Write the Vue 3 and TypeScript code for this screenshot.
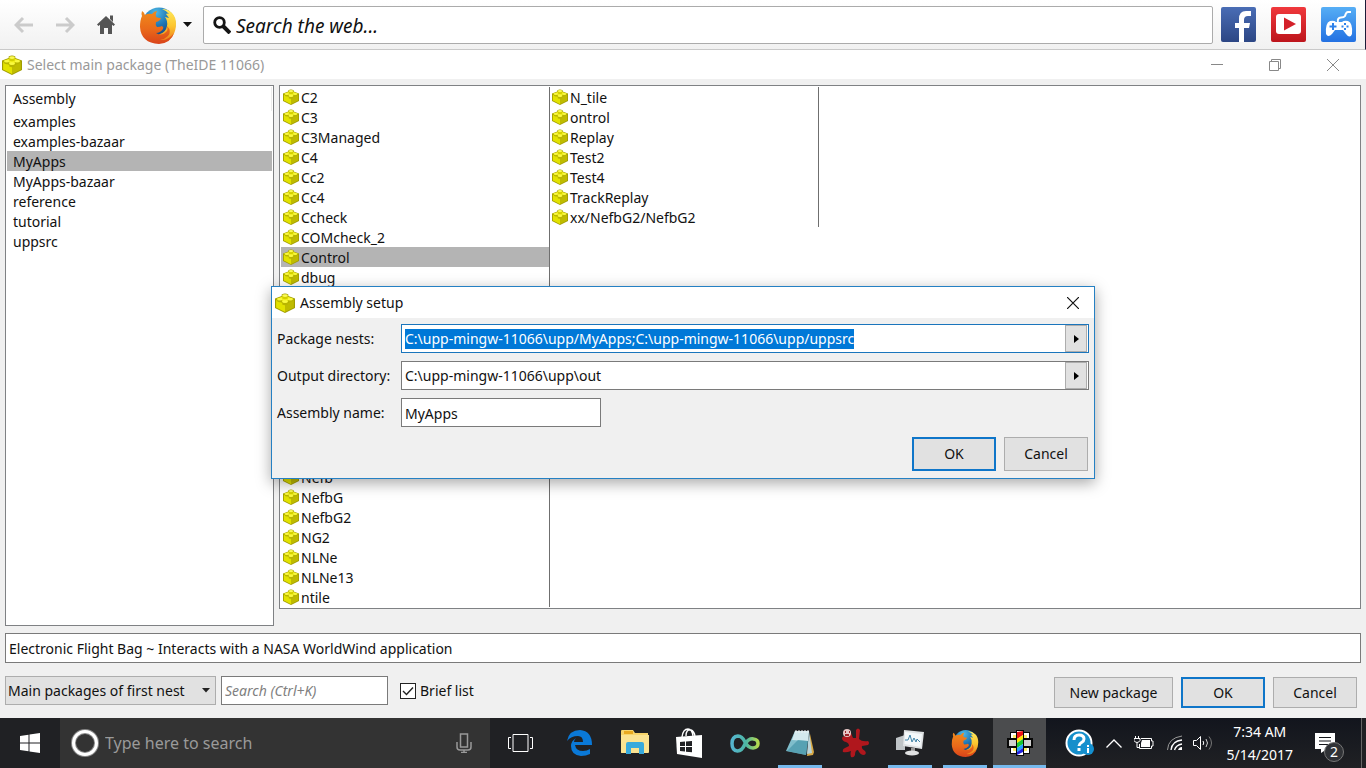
<script setup lang="ts">
import { onMounted, ref } from 'vue'

const assemblies: string[] = ['examples', 'examples-bazaar', 'MyApps', 'MyApps-bazaar', 'reference', 'tutorial', 'uppsrc']
const firstTop: string[] = ['C2', 'C3', 'C3Managed', 'C4', 'Cc2', 'Cc4', 'Ccheck', 'COMcheck_2', 'Control', 'dbug']
const firstBottom: string[] = ['Nefb', 'NefbG', 'NefbG2', 'NG2', 'NLNe', 'NLNe13', 'ntile']
const second: string[] = ['N_tile', 'ontrol', 'Replay', 'Test2', 'Test4', 'TrackReplay', 'xx/NefbG2/NefbG2']

const assembly = ref('MyApps')
const current = ref('Control')
const brief = ref(true)
const nests = ref('C:\\upp-mingw-11066\\upp/MyApps;C:\\upp-mingw-11066\\upp/uppsrc')
const output = ref('C:\\upp-mingw-11066\\upp\\out')
const name = ref('MyApps')
const description = ref('Electronic Flight Bag ~ Interacts with a NASA WorldWind application')
const nestsInput = ref<HTMLInputElement | null>(null)

onMounted(() => {
  nestsInput.value?.focus()
  nestsInput.value?.select()
})
</script>

<template>
  <div class="desktop">
    <svg class="sprite" aria-hidden="true">
      <defs>
        <linearGradient id="fox" x1="0" y1="0" x2="0" y2="1">
          <stop offset="0" stop-color="#f08a1c" />
          <stop offset=".55" stop-color="#ea6a1a" />
          <stop offset="1" stop-color="#d9431a" />
        </linearGradient>
        <linearGradient id="tail" x1="0" y1="0" x2="0" y2="1">
          <stop offset="0" stop-color="#ffe95c" />
          <stop offset=".5" stop-color="#fcc52e" />
          <stop offset="1" stop-color="#ec7418" />
        </linearGradient>
        <radialGradient id="globe" cx=".4" cy=".15" r=".8">
          <stop offset="0" stop-color="#4cb8e6" />
          <stop offset=".5" stop-color="#1f76b4" />
          <stop offset="1" stop-color="#123a70" />
        </radialGradient>
        <symbol id="brick" viewBox="1 0 18 20" preserveAspectRatio="none">
          <path d="M1 5.500 7 3V1.500Q10-.5 13 1.500V3l6 2.500V15l-9 5-9-5z" fill="#a19d00" />
          <path d="M2 7l8 4v8l-8-4.500z" fill="#e2e200" />
          <path d="M18 7l-8 4v8l8-4.500z" fill="#bfbb00" />
          <path d="M2 6l8-3.500L18 6l-8 4.500z" fill="#f2f01c" />
          <path d="M7.500 2.500v3q2.500 1.500 5 0v-3z" fill="#d4d000" />
          <ellipse cx="10" cy="2.600" rx="2.500" ry="1.400" fill="#fbfa55" />
          <path d="M3 6.500v2q2 1.500 4.500.3v-2zM12.500 6.800v2q2 1.200 4.500-.3v-2zM7.500 9v2.500q2.500 1.500 5 0V9z" fill="#b9b500" />
          <ellipse cx="5.300" cy="6.200" rx="2.300" ry="1.300" fill="#f9f840" />
          <ellipse cx="14.700" cy="6.200" rx="2.300" ry="1.300" fill="#f9f840" />
          <ellipse cx="10" cy="8.700" rx="2.500" ry="1.400" fill="#f9f840" />
        </symbol>
        <symbol id="firefox" viewBox="0 0 38 38">
          <circle cx="20" cy="18" r="16.500" fill="url(#globe)" />
          <path d="M23 3q5 2 7 5-2-1-3 0l3 4-4-1q3 4 2 9-1 6-7 8l-5 3 8 6Q37 32 37 18q0-7-4-11-4-4-10-4z" fill="url(#tail)" />
          <path d="M3 5q2 1 3 4 3-2 7-1 2-3 5-3-2 3-1 6 2 1 5 1-1 3-5 4-1 3 1 5 3 0 5-1 2 1 1 3-3 4-7 4 6 4 11-2 1-2 0-5 5 5 1 10-3 3-8 4 8 1 14-7-3 10-15 11Q2 37 1 21q0-7 2-11-1-2 0-5z" fill="url(#fox)" />
        </symbol>
      </defs>
    </svg>

    <header class="browser">
      <button class="plain" aria-label="Back">
        <svg width="20" height="18" viewBox="0 0 20 18"><path d="M9 2 2 9l7 7M2.500 9H19" fill="none" stroke="#cbcbcb" stroke-width="3" /></svg>
      </button>
      <button class="plain" aria-label="Forward">
        <svg width="20" height="18" viewBox="0 0 20 18"><path d="m11 2 7 7-7 7M17.500 9H1" fill="none" stroke="#cbcbcb" stroke-width="3" /></svg>
      </button>
      <button class="plain home" aria-label="Home">
        <svg width="20" height="20" viewBox="0 0 20 20"><path d="M14 .5h3V7l-3-3z" fill="#555" /><path d="M10 1 1 9.500 2.500 11 4 9.800V19h4v-6h4v6h4V9.800l1.500 1.200L19 9.500z" fill="#555" /></svg>
      </button>
      <button class="plain engine" aria-label="Search engine">
        <svg width="38" height="38"><use href="#firefox" /></svg>
        <svg width="9" height="5" viewBox="0 0 9 5"><path d="M0 0h9L4.500 5z" fill="#111" /></svg>
      </button>
      <label class="web-search">
        <svg width="18" height="18" viewBox="0 0 18 18"><circle cx="6.500" cy="6.500" r="4.800" fill="none" stroke="#151515" stroke-width="2.800" /><path d="m10 10 7 7" stroke="#151515" stroke-width="4" /></svg>
        <input type="text" placeholder="Search the web..." aria-label="Search the web" />
      </label>
      <a href="#" aria-label="Facebook">
        <svg width="35" height="35" viewBox="0 0 35 35"><defs><linearGradient id="fb" x2="0" y2="1"><stop stop-color="#4a6db5" /><stop offset="1" stop-color="#2c4684" /></linearGradient></defs><rect width="35" height="35" rx="2" fill="url(#fb)" /><path d="M18 35V21h-4v-5h4v-4q0-8 7-8h5v5h-3q-4 0-4 4v3h6l-1 5h-5v14z" fill="#fff" /></svg>
      </a>
      <a href="#" aria-label="Video">
        <svg width="35" height="35" viewBox="0 0 35 35"><defs><linearGradient id="yt" x2="0" y2="1"><stop stop-color="#f0383c" /><stop offset="1" stop-color="#bd151c" /></linearGradient></defs><rect width="35" height="35" rx="2" fill="url(#yt)" /><rect x="5" y="7" width="25" height="20" rx="3" fill="#fff" /><path d="M13 10.500v13L25 17z" fill="#d4202a" /></svg>
      </a>
      <a href="#" aria-label="Games">
        <svg width="35" height="35" viewBox="0 0 35 35"><defs><linearGradient id="gm" x2="0" y2="1"><stop stop-color="#56aef5" /><stop offset="1" stop-color="#2371e2" /></linearGradient></defs><rect width="35" height="35" rx="2" fill="url(#gm)" /><path d="M17 15q-1-4 3-4.500 3 0 4-1.500 1-4 3-4h3" fill="none" stroke="#fff" stroke-width="2" /><path d="M9 14q4-1 6 1h6q2-2 6-1 5 2 4 13-2 5-6 0l-3-4h-8l-3 4q-4 4-6 0-1-11 4-13z" fill="#fff" /><path d="M12 16v7M8.500 19.500h7" stroke="#2f82ea" stroke-width="2" /><path d="M24 16v2m0 3v2m-3.500-3.500h2m3 0h2" stroke="#2f82ea" stroke-width="2" /></svg>
      </a>
    </header>

    <div class="titlebar">
      <svg width="20" height="20"><use href="#brick" /></svg>
      <h1>Select main package (TheIDE 11066)</h1>
      <button class="plain" aria-label="Minimize"><svg width="12" height="12" viewBox="0 0 12 12"><path d="M0 5.500h12" stroke="#888" /></svg></button>
      <button class="plain" aria-label="Restore"><svg width="12" height="12" viewBox="0 0 12 12"><path d="M.5 2.500h9v9h-9zM2.500 2.500v-2h9v9h-2" fill="none" stroke="#888" /></svg></button>
      <button class="plain" aria-label="Close"><svg width="12" height="12" viewBox="0 0 12 12"><path d="m0 0 12 12M12 0 0 12" stroke="#888" /></svg></button>
    </div>

    <main class="window">
      <div class="panes">
        <section class="pane assemblies">
          <h2>Assembly</h2>
          <ul>
            <li v-for="a in assemblies" :key="a" :class="{ selected: a === assembly }" @click="assembly = a">{{ a }}</li>
          </ul>
        </section>
        <section class="pane packages">
          <div class="column split">
            <ul>
              <li v-for="p in firstTop" :key="p" :class="{ selected: p === current }" @click="current = p">
                <svg width="16" height="16"><use href="#brick" /></svg><span>{{ p }}</span>
              </li>
            </ul>
            <ul>
              <li v-for="p in firstBottom" :key="p" :class="{ selected: p === current }" @click="current = p">
                <svg width="16" height="16"><use href="#brick" /></svg><span>{{ p }}</span>
              </li>
            </ul>
          </div>
          <ul class="column">
            <li v-for="p in second" :key="p" :class="{ selected: p === current }" @click="current = p">
              <svg width="16" height="16"><use href="#brick" /></svg><span>{{ p }}</span>
            </li>
          </ul>
        </section>
      </div>
      <input v-model="description" class="field description" type="text" aria-label="Package description" />
      <div class="controls">
        <div class="select">
          <select aria-label="Package filter"><option>Main packages of first nest</option></select>
          <svg width="8" height="5" viewBox="0 0 8 5"><path d="M0 0h8L4 4.500z" fill="#222" /></svg>
        </div>
        <input class="field quick" type="text" placeholder="Search (Ctrl+K)" aria-label="Search packages" />
        <label class="check">
          <span class="box">
            <input v-model="brief" type="checkbox" />
            <svg v-if="brief" width="12" height="10" viewBox="0 0 12 10"><path d="m1 5 3.500 3.500L11 1.500" fill="none" stroke="#222" stroke-width="1.400" /></svg>
          </span>
          Brief list
        </label>
        <button class="btn wide">New package</button>
        <button class="btn primary">OK</button>
        <button class="btn">Cancel</button>
      </div>
    </main>

    <footer class="taskbar">
      <button class="plain start" aria-label="Start">
        <svg width="20" height="20" viewBox="0 0 20 20"><path d="M0 3l8.500-1.200v7.700H0zM9.500 1.600 20 0v9.500H9.500zM0 10.500h8.500v7.700L0 17zM9.500 10.500H20V20L9.500 18.400z" fill="#fff" /></svg>
      </button>
      <label class="cortana">
        <svg width="28" height="28" viewBox="0 0 28 28"><circle cx="14" cy="14" r="11.500" fill="none" stroke="#888" stroke-width="5" /><circle cx="14" cy="14" r="11.500" fill="none" stroke="#fff" stroke-width="3" /></svg>
        <input type="text" placeholder="Type here to search" aria-label="Type here to search" />
        <svg width="16" height="20" viewBox="0 0 16 20"><path d="M4.500 1h7v13h-7zM1 9v5q0 3 3 3h8q3 0 3-3V9M8 17v3M5 19.500h6" fill="none" stroke="#999" stroke-width="1.500" /></svg>
      </label>
      <button class="plain taskview" aria-label="Task view">
        <svg width="25" height="18" viewBox="0 0 25 18"><path d="M5 .5h15v17H5zM3 3.500H.5v11H3m19-11h2.500v11H22" fill="none" stroke="#fff" /></svg>
      </button>
      <nav class="apps">
        <button class="plain app" aria-label="Edge">
          <svg width="26" height="26" viewBox="0 0 26 26"><path d="M0 11Q2 0 13 0q12 1 12 15H8q1 6 8 6 4 0 7-2v5q-4 2-9 2-10-1-10-10 0-5 5-8-2 2-2 4h9q0-6-5-6Q4 6 0 11z" fill="#0a79d8" /></svg>
        </button>
        <button class="plain app" aria-label="File Explorer">
          <svg width="28" height="26" viewBox="0 0 28 26"><path d="M0 1q0-1 1-1h11l2 3h13v20H1q-1 0-1-1z" fill="#f7d56b" /><path d="M3 1h9v3H3z" fill="#e9a91f" /><path d="M0 5h28v17q0 1-1 1H1q-1 0-1-1z" fill="#fbe391" /><path d="M5 24V14q0-2 2-2h14q2 0 2 2v10h-5v-6h-8v6z" fill="#38aadc" /></svg>
        </button>
        <button class="plain app" aria-label="Store">
          <svg width="27" height="30" viewBox="0 0 27 30"><path d="M6 9Q7 1 12 1q4 0 5 7M10 8q0-7 5-6 3 1 4 6" fill="none" stroke="#fff" stroke-width="1.400" /><path d="M0 9l26-2v23L1 26z" fill="#fff" /><path d="M4 14l5-.5V18H4zM10 13.400l6-.5V18h-6zM4 19h5v4.600l-5-.5zM10 19h6v5.200l-6-.5z" fill="#202124" /></svg>
        </button>
        <button class="plain app" aria-label="Infinity">
          <svg width="30" height="19" viewBox="0 0 30 19"><defs><linearGradient id="inf"><stop stop-color="#55b5cf" /><stop offset=".55" stop-color="#4db6a3" /><stop offset="1" stop-color="#b5d94d" /></linearGradient></defs><path d="M15 10q-3 7-7.500 7Q2 16.500 2 9.500T8 2q4 0 7 6 3 6 8 6 5-.500 5-4.500T23.500 5Q19 4 15 10z" fill="none" stroke="url(#inf)" stroke-width="3.500" /></svg>
        </button>
        <button class="plain app running" aria-label="Notepad">
          <svg width="28" height="28" viewBox="0 0 28 28"><path d="M24 5l4 18-1 3-6 1z" fill="#d7a845" /><path d="M23 2l3 22-5 1z" fill="#b8d3da" /><path d="M9 2h14l-3 24-20-4z" fill="#7fbdcb" /><path d="M9 2h14l-1 10-16-1z" fill="#d3e9ee" /><path d="M1 22 12 11l10 1-2 14z" fill="#4695a8" opacity=".7" /><path d="M10 1v3m3-3v3m3-3v3m3-3v3m3-3v3" stroke="#eef2f3" /></svg>
        </button>
        <button class="plain app" aria-label="Irfan">
          <svg width="30" height="30" viewBox="0 0 30 30"><path d="M4 4q4-4 7 1l2 5 3 0 0-8q2-3 4 0l-1 9q3 3 9 2 2 2 0 4l-6 1q-1 3 3 5 2 3-1 4-4 0-6-5-3 0-3 5-1 3-4 2-1-3 0-6-5 2-8 1-1-3 2-4l4-2q0-3-3-4-4-1-4-4 1-3 4-1z" fill="#b0171d" /><circle cx="7" cy="5" r="4" fill="#e7c6c5" /><path d="M5 4h1m3 0h1M5 7h4" stroke="#9c252b" stroke-width="2" /></svg>
        </button>
        <button class="plain app running" aria-label="System monitor">
          <svg width="28" height="26" viewBox="0 0 28 26"><path d="M0 8l9-3v15H0z" fill="#bfc4c7" /><path d="M8 0l20 2-2 17-19-3z" fill="#dfe2e4" /><path d="M9 2l17 2-1.500 13L8.500 14z" fill="#f4f8fa" /><path d="m9 10 3 0 2-5 2 7 2-4 2 4 1-3 3 3" fill="none" stroke="#3f83a8" /><path d="M15 18h4v4h-4z" fill="#999" /><ellipse cx="16" cy="23" rx="7" ry="2.500" fill="#e0e1e2" /></svg>
        </button>
        <button class="plain app running" aria-label="Firefox"><svg width="28" height="28"><use href="#firefox" /></svg></button>
        <button class="plain app running active" aria-label="TheIDE">
          <svg width="26" height="26" viewBox="0 0 26 26">
            <path d="M3 2h6V0h8v2h6v6h3v10h-3v6h-6v2H9v-2H3v-6H0V8h3z" fill="#080808" />
            <path d="M4 3h5v5H4zm13 0h5v5h-5zM4 18h5v5H4zm13 0h5v5h-5z" fill="#fff" />
            <path d="M6 5h3v3H6zm11 0h3v3h-3zM6 18h3v3H6zm11 0h3v3h-3z" fill="#fff06a" />
            <path d="M2 10h7v6H2zm15 0h7v6h-7z" fill="#cfcfcf" />
            <path d="M10 1h6v24h-6z" fill="#fff" />
            <path d="M10 2l6-1v4l-6 4z" fill="#f01515" />
            <path d="M10 9l6-4v4l-6 4z" fill="#ffe600" />
            <path d="M10 13l6-4v5l-6 4z" fill="#16c832" />
            <path d="M10 18l6-4v4l-6 4z" fill="#1ea5ff" />
            <path d="M10 22l6-4v4l-6 3z" fill="#2222e0" />
          </svg>
        </button>
      </nav>
      <div class="tray">
        <button class="plain" aria-label="Help">
          <svg width="29" height="28" viewBox="0 0 29 28"><circle cx="14" cy="14" r="12.500" fill="#168fcb" stroke="#fff" stroke-width="2" /><path d="M9 11q0-5 5-5t5 4q0 2-2.500 3.500T14 17m0 2v3" fill="none" stroke="#fff" stroke-width="3" /><circle cx="23" cy="20" r="6" fill="#1490d0" /><path d="M23 16v2m0 1v5" stroke="#fff" stroke-width="2" /></svg>
        </button>
        <button class="plain chevron" aria-label="Hidden icons"><svg width="16" height="9" viewBox="0 0 16 9"><path d="m.5 8.500 7.500-7.500 7.500 7.500" fill="none" stroke="#fff" stroke-width="1.300" /></svg></button>
        <button class="plain battery" aria-label="Battery"><svg width="20" height="14" viewBox="0 0 20 14"><path d="M1.500 0v2m3-2v2M0 2.500h6v2q-1 2-3 2T0 4.500zM3 6.500v5h2" fill="none" stroke="#fff" /><path d="M7 2.500h10.500V5H19v5h-1.500v2.500H5.500V8" fill="none" stroke="#fff" /><path d="M8 4h8v7H7V7z" fill="#fff" /></svg></button>
        <button class="plain wifi" aria-label="Network"><svg width="16" height="16" viewBox="0 0 16 16"><path d="M.5 15Q1 3 15 1" fill="none" stroke="#999" /><path d="M4 15Q5 6 15 5M7.500 15Q9 10 15 9" fill="none" stroke="#fff" stroke-width="1.300" /><path d="M11 15q1-3 4-3v3z" fill="#fff" /></svg></button>
        <button class="plain sound" aria-label="Volume"><svg width="20" height="16" viewBox="0 0 20 16"><path d="M.5 5.500h3l4-4v13l-4-4h-3zM10 6q1.500 2 0 4" fill="none" stroke="#fff" /><path d="M13 4q3 4 0 8" fill="none" stroke="#ccc" /><path d="M16 1.500q5 6.500 0 13" fill="none" stroke="#777" /></svg></button>
        <time class="clock" datetime="2017-05-14T07:34"><span>7:34 AM</span><span>5/14/2017</span></time>
        <button class="plain notices" aria-label="Notifications">
          <svg width="20" height="20" viewBox="0 0 20 20"><path d="M0 0h20v16h-8l-6 4v-4H0z" fill="#fff" /><path d="M4 4.500h12M4 8h12M4 11.500h12" stroke="#15171b" /></svg>
          <span class="count">2</span>
        </button>
      </div>
    </footer>

    <div class="overlay">
      <form class="dialog" role="dialog" aria-labelledby="dialog-title" @submit.prevent>
        <div class="dialog-title">
          <svg width="20" height="20"><use href="#brick" /></svg>
          <h2 id="dialog-title">Assembly setup</h2>
          <button type="button" class="plain" aria-label="Close dialog"><svg width="12" height="12" viewBox="0 0 12 12"><path d="m0 0 12 12M12 0 0 12" stroke="#111" stroke-width="1.200" /></svg></button>
        </div>
        <div class="form">
          <label for="nests">Package nests:</label>
          <div class="field combo current">
            <input id="nests" ref="nestsInput" v-model="nests" type="text" />
            <button type="button" aria-label="Choose nests"><svg width="5" height="8" viewBox="0 0 5 8"><path d="M0 0v8l5-4z" /></svg></button>
          </div>
          <label for="output">Output directory:</label>
          <div class="field combo">
            <input id="output" v-model="output" type="text" />
            <button type="button" aria-label="Choose directory"><svg width="5" height="8" viewBox="0 0 5 8"><path d="M0 0v8l5-4z" /></svg></button>
          </div>
          <label for="name">Assembly name:</label>
          <input id="name" v-model="name" class="field short" type="text" />
        </div>
        <div class="dialog-buttons">
          <button class="btn primary">OK</button>
          <button type="button" class="btn">Cancel</button>
        </div>
      </form>
    </div>
  </div>
</template>

<style>
body {
  margin: 0;
  background: #f0f0f0;
}
</style>

<style scoped>
* {
  box-sizing: border-box;
}

.desktop {
  position: relative;
  display: flex;
  flex-direction: column;
  min-height: 100vh;
  font: 14px/20px 'Noto Sans', 'Open Sans', sans-serif;
  color: #111;
  background: #f0f0f0;
}

.sprite {
  position: absolute;
  width: 0;
  height: 0;
}

svg {
  display: block;
  flex: none;
}

h1,
h2 {
  margin: 0;
  font-size: 14px;
  font-weight: 400;
}

ul {
  margin: 0;
  padding: 0;
  list-style: none;
}

input,
select,
button {
  font: inherit;
  color: inherit;
  margin: 0;
}

input {
  min-width: 0;
  outline: none;
}

.plain {
  display: flex;
  align-items: center;
  justify-content: center;
  padding: 0;
  border: 0;
  background: none;
}

.browser {
  display: flex;
  align-items: center;
  height: 50px;
  padding: 0 9px 0 14px;
  gap: 15px;
  background: linear-gradient(#fff, #f1f1f1);
  border-bottom: 1px solid #c9c9c9;
  border-right: 1px solid #1b1b38;
}

.browser .plain + .plain {
  margin-left: 6px;
}

.browser .engine {
  gap: 6px;
  padding-left: 2px;
}

.web-search {
  flex: 1;
  display: flex;
  align-items: center;
  gap: 4px;
  height: 38px;
  margin: 0 -7px 0 -4px;
  padding-left: 9px;
  background: #fff;
  border: 1px solid #ababab;
  border-radius: 2px;
}

.web-search input {
  flex: 1;
  border: 0;
  padding: 2px 1px 0;
  font-size: 19px;
  line-height: 28px;
  background: none;
}

.web-search input::placeholder {
  color: #111;
  font-style: italic;
  opacity: 1;
}

.titlebar {
  display: flex;
  align-items: center;
  height: 29px;
  padding: 0 4px 0 2px;
  background: #fff;
}

.titlebar h1 {
  flex: 1;
  padding-left: 5px;
  color: #999;
}

.titlebar .plain {
  width: 58px;
  height: 28px;
}

.window {
  flex: 1;
  display: flex;
  flex-direction: column;
  padding: 6px 5px 10px;
}

.panes {
  flex: 1;
  display: grid;
  grid-template-columns: 269px 1fr;
  gap: 5px;
}

.pane {
  padding: 1px;
  background: #fff;
  border: 1px solid #7f8184;
}

.assemblies h2 {
  height: 24px;
  padding: 2px 6px;
  border-right: 1px solid #ececec;
}

.assemblies li {
  height: 20px;
  padding: 1px 6px 0;
}

.selected {
  background: #b4b4b4;
}

.packages {
  display: flex;
  align-items: flex-start;
  align-self: start;
}

.column {
  width: 269px;
  border-right: 1px solid #6f6f6f;
}

.split {
  display: flex;
  flex-direction: column;
  gap: 180px;
}

.column li {
  display: flex;
  align-items: center;
  gap: 2px;
  height: 20px;
  padding-left: 2px;
}

.column li span {
  padding-top: 1px;
}

.field {
  height: 29px;
  padding: 0 3px;
  background: #fff;
  border: 1px solid #7a7a7a;
}

.description {
  height: 30px;
  margin: 7px 0 13px;
}

.controls {
  display: flex;
  align-items: flex-start;
  height: 32px;
}

.select {
  position: relative;
  width: 211px;
}

.select select {
  appearance: none;
  display: block;
  width: 100%;
  height: 29px;
  padding: 0 20px 0 2px;
  background: #e1e1e1;
  border: 1px solid #adadad;
  border-radius: 0;
}

.select svg {
  position: absolute;
  right: 6px;
  top: 12px;
  pointer-events: none;
}

.quick {
  width: 167px;
  margin: 0 12px 0 5px;
}

.quick::placeholder {
  color: #808080;
  font-style: italic;
  opacity: 1;
}

.check {
  flex: 1;
  display: flex;
  align-items: center;
  gap: 4px;
  height: 30px;
}

.box {
  display: grid;
  place-items: center;
}

.box > * {
  grid-area: 1 / 1;
}

.box input {
  appearance: none;
  width: 16px;
  height: 16px;
  background: #fff;
  border: 1px solid #222;
}

.box svg {
  pointer-events: none;
}

.btn {
  width: 84px;
  height: 31px;
  margin-left: 8px;
  padding: 0;
  background: #e1e1e1;
  border: 1px solid #adadad;
}

.controls .btn {
  margin-top: 1px;
}

.controls .btn:last-child {
  margin-right: 4px;
}

.wide {
  width: 119px;
}

.primary {
  border: 2px solid #0f76c9;
}

.taskbar {
  display: flex;
  align-items: stretch;
  height: 50px;
  color: #fff;
  background: #202124;
}

.start {
  width: 60px;
}

.cortana {
  width: 430px;
  display: flex;
  align-items: center;
  gap: 5px;
  padding: 0 18px 0 11px;
  background: #333;
}

.cortana input {
  flex: 1;
  border: 0;
  padding: 0 1px;
  font-size: 16px;
  line-height: 24px;
  background: none;
}

.cortana input::placeholder {
  color: #9a9a9a;
  opacity: 1;
}

.taskview {
  width: 60px;
}

.apps {
  display: flex;
  gap: 2px;
  margin-left: 3px;
}

.app {
  width: 53px;
  border-bottom: 3px solid transparent;
  border-top: 3px solid transparent;
}

.running {
  background: linear-gradient(#76b9ed, #76b9ed) bottom / 44px 3px no-repeat border-box;
}

.active {
  background: linear-gradient(#76b9ed, #76b9ed) bottom / 100% 3px no-repeat border-box #4b4c4e;
}

.tray {
  flex: 1;
  display: flex;
  align-items: center;
  justify-content: flex-end;
  padding-right: 26px;
  margin-right: 4px;
  border-right: 1px solid #666;
  background: linear-gradient(#12151d, #202124);
}

.chevron {
  margin-left: 12px;
}

.battery {
  margin-left: 12px;
}

.wifi {
  margin-left: 13px;
}

.sound {
  margin-left: 10px;
}

.clock {
  display: flex;
  flex-direction: column;
  align-items: center;
  gap: 3px;
  margin: 0 22px 0 14px;
}

.notices {
  position: relative;
}

.count {
  position: absolute;
  left: 9px;
  top: 9px;
  width: 20px;
  height: 20px;
  border: 1px solid #777;
  border-radius: 50%;
  background: #303236;
  line-height: 18px;
}

.overlay {
  position: absolute;
  inset: 0 0 3px;
  display: flex;
  align-items: center;
  justify-content: center;
}

.dialog {
  width: 824px;
  max-width: 100%;
  background: #f0f0f0;
  border: 1px solid #2580c3;
  box-shadow: 0 4px 14px rgba(0, 0, 0, 0.35);
}

.dialog-title {
  display: flex;
  align-items: center;
  height: 31px;
  padding: 0 15px 0 3px;
  background: #fff;
}

.dialog-title h2 {
  flex: 1;
  padding-left: 5px;
}

.form {
  display: grid;
  grid-template-columns: 124px 1fr;
  gap: 8px 0;
  align-items: center;
  padding: 6px 5px 10px;
}

.combo {
  display: flex;
  padding-right: 1px;
}

.combo input {
  flex: 1;
  padding: 1px 0 0;
  border: 0;
  background: none;
}

.combo input::selection {
  color: #fff;
  background: #0078d7;
}

.combo button {
  display: flex;
  align-items: center;
  justify-content: center;
  width: 22px;
  padding: 0;
  background: #e1e1e1;
  border: 1px solid #adadad;
}

.current {
  border-color: #1a75bc;
}

.short {
  width: 200px;
  padding-top: 1px;
}

.dialog-buttons {
  display: flex;
  justify-content: flex-end;
  padding: 0 6px 7px;
}

.dialog-buttons .btn {
  height: 34px;
}
</style>
